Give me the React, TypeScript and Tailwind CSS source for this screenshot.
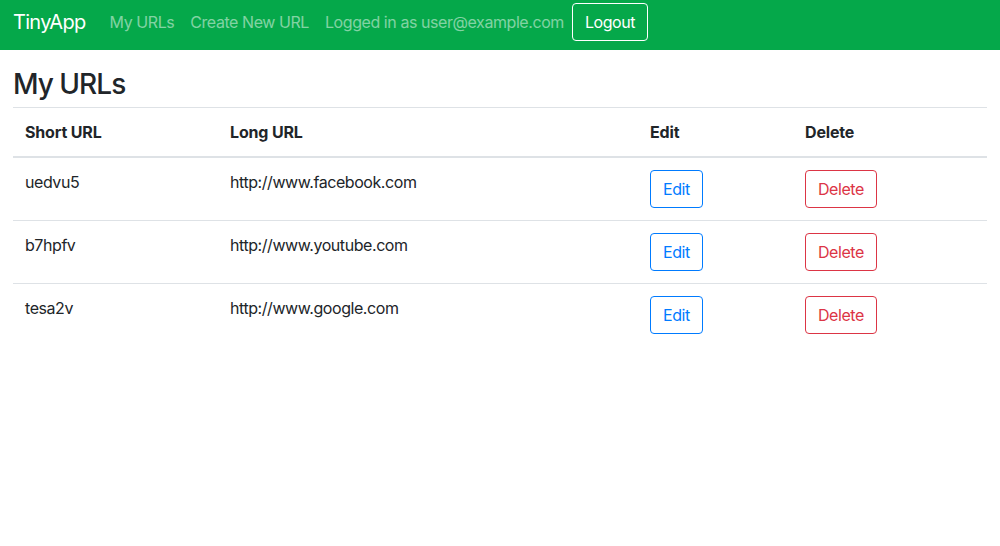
const urls = [
  { short: 'uedvu5', long: 'http://www.facebook.com' },
  { short: 'b7hpfv', long: 'http://www.youtube.com' },
  { short: 'tesa2v', long: 'http://www.google.com' },
];

export default function App() {
  return (
    <div className="min-h-[546px] bg-white font-['Inter','Liberation_Sans',sans-serif] text-[16px] leading-6 tracking-[-0.027em] text-[#212529]">
      <nav className="flex h-[50px] items-start bg-[#05a84a] px-[13px] pt-[3px]">
        <a href="#" className="mr-4 py-[5px] text-[20px] leading-7 tracking-[-0.035em] text-white">
          TinyApp
        </a>
        <div className="flex items-center">
          <a href="#" className="px-2 py-[7px] text-white/50">
            My URLs
          </a>
          <a href="#" className="px-2 py-[7px] text-white/50">
            Create New URL
          </a>
          <span className="px-2 py-[7px] text-white/50">Logged in as user@example.com</span>
          <button
            type="button"
            className="rounded border border-white px-3 py-[6px] leading-6 text-white"
          >
            Logout
          </button>
        </div>
      </nav>

      <main className="px-[13px]">
        <h3 className="mt-[18px] mb-[6px] h-[33px] text-[28px] leading-[33px] font-medium tracking-[-0.035em]">
          My URLs
        </h3>
        <table className="w-full border-collapse text-left">
          <thead>
            <tr className="border-t border-[#dee2e6] tracking-[-0.01em]">
              <th className="w-[205px] border-b-2 border-[#dee2e6] p-3 font-bold">Short URL</th>
              <th className="w-[420px] border-b-2 border-[#dee2e6] p-3 font-bold">Long URL</th>
              <th className="w-[155px] border-b-2 border-[#dee2e6] p-3 font-bold">Edit</th>
              <th className="border-b-2 border-[#dee2e6] p-3 font-bold">Delete</th>
            </tr>
          </thead>
          <tbody>
            {urls.map((u, i) => (
              <tr key={u.short} className={i > 0 ? 'border-t border-[#dee2e6]' : ''}>
                <td className="p-3 align-top">{u.short}</td>
                <td className="p-3 align-top">{u.long}</td>
                <td className="p-3 align-top">
                  <button
                    type="button"
                    className="rounded border border-[#007bff] px-3 py-[6px] leading-6 text-[#007bff]"
                  >
                    Edit
                  </button>
                </td>
                <td className="p-3 align-top">
                  <button
                    type="button"
                    className="rounded border border-[#dc3545] px-3 py-[6px] leading-6 text-[#dc3545]"
                  >
                    Delete
                  </button>
                </td>
              </tr>
            ))}
          </tbody>
        </table>
      </main>
    </div>
  );
}
